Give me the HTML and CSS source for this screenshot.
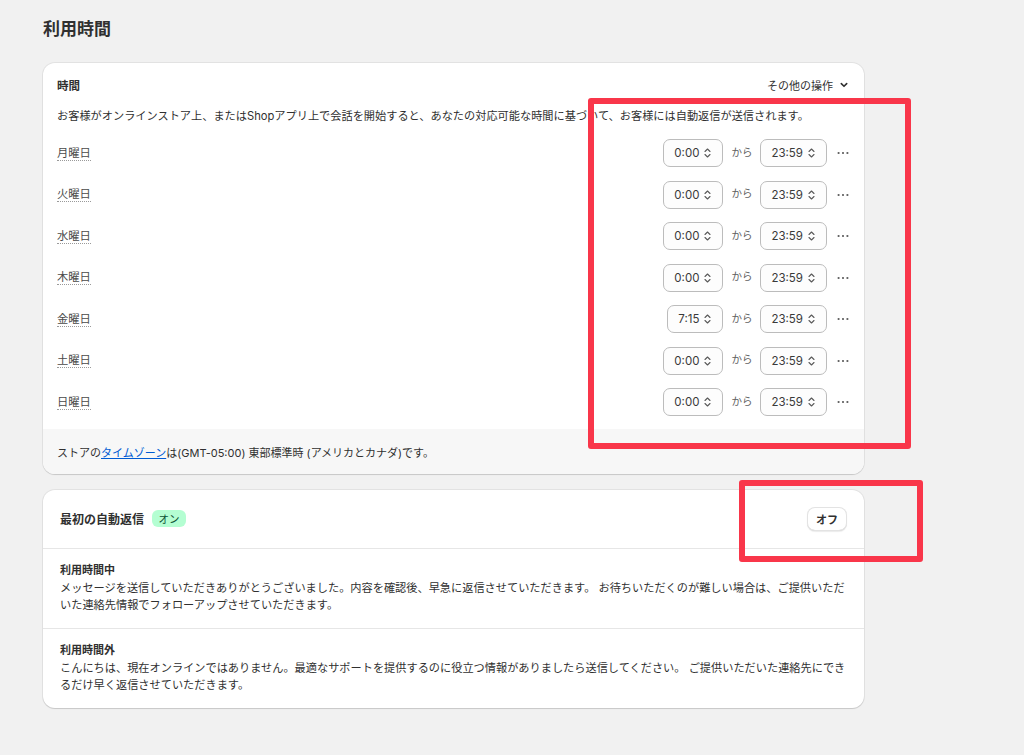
FILE: index.html
```html
<!DOCTYPE html>
<html lang="ja">
<head>
<meta charset="utf-8">
<title>利用時間</title>
<link rel="stylesheet" href="styles.css">
</head>
<body>
<div class="page">
  <h1 class="page-title">利用時間</h1>

  <section class="card">
    <div class="card-head">
      <h2>時間</h2>
      <div class="more">その他の操作
        <svg width="10" height="10" viewBox="0 0 10 10"><path d="M2.3 3.6 L5 6.3 L7.7 3.6" fill="none" stroke="#303030" stroke-width="1.6" stroke-linecap="round" stroke-linejoin="round"/></svg>
      </div>
    </div>
    <p class="desc">お客様がオンラインストア上、またはShopアプリ上で会話を開始すると、あなたの対応可能な時間に基づいて、お客様には自動返信が送信されます。</p>

    <div class="days">
      <div class="day"><span class="day-label">月曜日</span>
        <div class="controls">
          <div class="time">0:00<svg class="updown" width="7" height="12" viewBox="0 0 7 12"><path d="M1 4.5 L3.5 2 L6 4.5 M1 7.5 L3.5 10 L6 7.5" fill="none" stroke="#5a5a5a" stroke-width="1.1" stroke-linecap="round" stroke-linejoin="round"/></svg></div>
          <span class="from">から</span>
          <div class="time">23:59<svg class="updown" width="7" height="12" viewBox="0 0 7 12"><path d="M1 4.5 L3.5 2 L6 4.5 M1 7.5 L3.5 10 L6 7.5" fill="none" stroke="#5a5a5a" stroke-width="1.1" stroke-linecap="round" stroke-linejoin="round"/></svg></div>
          <svg class="dots" width="12" height="4" viewBox="0 0 12 4"><circle cx="1.6" cy="2" r="1.1" fill="#5a5a5a"/><circle cx="6" cy="2" r="1.1" fill="#5a5a5a"/><circle cx="10.4" cy="2" r="1.1" fill="#5a5a5a"/></svg>
        </div>
      </div>
      <div class="day"><span class="day-label">火曜日</span>
        <div class="controls">
          <div class="time">0:00<svg class="updown" width="7" height="12" viewBox="0 0 7 12"><path d="M1 4.5 L3.5 2 L6 4.5 M1 7.5 L3.5 10 L6 7.5" fill="none" stroke="#5a5a5a" stroke-width="1.1" stroke-linecap="round" stroke-linejoin="round"/></svg></div>
          <span class="from">から</span>
          <div class="time">23:59<svg class="updown" width="7" height="12" viewBox="0 0 7 12"><path d="M1 4.5 L3.5 2 L6 4.5 M1 7.5 L3.5 10 L6 7.5" fill="none" stroke="#5a5a5a" stroke-width="1.1" stroke-linecap="round" stroke-linejoin="round"/></svg></div>
          <svg class="dots" width="12" height="4" viewBox="0 0 12 4"><circle cx="1.6" cy="2" r="1.1" fill="#5a5a5a"/><circle cx="6" cy="2" r="1.1" fill="#5a5a5a"/><circle cx="10.4" cy="2" r="1.1" fill="#5a5a5a"/></svg>
        </div>
      </div>
      <div class="day"><span class="day-label">水曜日</span>
        <div class="controls">
          <div class="time">0:00<svg class="updown" width="7" height="12" viewBox="0 0 7 12"><path d="M1 4.5 L3.5 2 L6 4.5 M1 7.5 L3.5 10 L6 7.5" fill="none" stroke="#5a5a5a" stroke-width="1.1" stroke-linecap="round" stroke-linejoin="round"/></svg></div>
          <span class="from">から</span>
          <div class="time">23:59<svg class="updown" width="7" height="12" viewBox="0 0 7 12"><path d="M1 4.5 L3.5 2 L6 4.5 M1 7.5 L3.5 10 L6 7.5" fill="none" stroke="#5a5a5a" stroke-width="1.1" stroke-linecap="round" stroke-linejoin="round"/></svg></div>
          <svg class="dots" width="12" height="4" viewBox="0 0 12 4"><circle cx="1.6" cy="2" r="1.1" fill="#5a5a5a"/><circle cx="6" cy="2" r="1.1" fill="#5a5a5a"/><circle cx="10.4" cy="2" r="1.1" fill="#5a5a5a"/></svg>
        </div>
      </div>
      <div class="day"><span class="day-label">木曜日</span>
        <div class="controls">
          <div class="time">0:00<svg class="updown" width="7" height="12" viewBox="0 0 7 12"><path d="M1 4.5 L3.5 2 L6 4.5 M1 7.5 L3.5 10 L6 7.5" fill="none" stroke="#5a5a5a" stroke-width="1.1" stroke-linecap="round" stroke-linejoin="round"/></svg></div>
          <span class="from">から</span>
          <div class="time">23:59<svg class="updown" width="7" height="12" viewBox="0 0 7 12"><path d="M1 4.5 L3.5 2 L6 4.5 M1 7.5 L3.5 10 L6 7.5" fill="none" stroke="#5a5a5a" stroke-width="1.1" stroke-linecap="round" stroke-linejoin="round"/></svg></div>
          <svg class="dots" width="12" height="4" viewBox="0 0 12 4"><circle cx="1.6" cy="2" r="1.1" fill="#5a5a5a"/><circle cx="6" cy="2" r="1.1" fill="#5a5a5a"/><circle cx="10.4" cy="2" r="1.1" fill="#5a5a5a"/></svg>
        </div>
      </div>
      <div class="day"><span class="day-label">金曜日</span>
        <div class="controls">
          <div class="time">7:15<svg class="updown" width="7" height="12" viewBox="0 0 7 12"><path d="M1 4.5 L3.5 2 L6 4.5 M1 7.5 L3.5 10 L6 7.5" fill="none" stroke="#5a5a5a" stroke-width="1.1" stroke-linecap="round" stroke-linejoin="round"/></svg></div>
          <span class="from">から</span>
          <div class="time">23:59<svg class="updown" width="7" height="12" viewBox="0 0 7 12"><path d="M1 4.5 L3.5 2 L6 4.5 M1 7.5 L3.5 10 L6 7.5" fill="none" stroke="#5a5a5a" stroke-width="1.1" stroke-linecap="round" stroke-linejoin="round"/></svg></div>
          <svg class="dots" width="12" height="4" viewBox="0 0 12 4"><circle cx="1.6" cy="2" r="1.1" fill="#5a5a5a"/><circle cx="6" cy="2" r="1.1" fill="#5a5a5a"/><circle cx="10.4" cy="2" r="1.1" fill="#5a5a5a"/></svg>
        </div>
      </div>
      <div class="day"><span class="day-label">土曜日</span>
        <div class="controls">
          <div class="time">0:00<svg class="updown" width="7" height="12" viewBox="0 0 7 12"><path d="M1 4.5 L3.5 2 L6 4.5 M1 7.5 L3.5 10 L6 7.5" fill="none" stroke="#5a5a5a" stroke-width="1.1" stroke-linecap="round" stroke-linejoin="round"/></svg></div>
          <span class="from">から</span>
          <div class="time">23:59<svg class="updown" width="7" height="12" viewBox="0 0 7 12"><path d="M1 4.5 L3.5 2 L6 4.5 M1 7.5 L3.5 10 L6 7.5" fill="none" stroke="#5a5a5a" stroke-width="1.1" stroke-linecap="round" stroke-linejoin="round"/></svg></div>
          <svg class="dots" width="12" height="4" viewBox="0 0 12 4"><circle cx="1.6" cy="2" r="1.1" fill="#5a5a5a"/><circle cx="6" cy="2" r="1.1" fill="#5a5a5a"/><circle cx="10.4" cy="2" r="1.1" fill="#5a5a5a"/></svg>
        </div>
      </div>
      <div class="day"><span class="day-label">日曜日</span>
        <div class="controls">
          <div class="time">0:00<svg class="updown" width="7" height="12" viewBox="0 0 7 12"><path d="M1 4.5 L3.5 2 L6 4.5 M1 7.5 L3.5 10 L6 7.5" fill="none" stroke="#5a5a5a" stroke-width="1.1" stroke-linecap="round" stroke-linejoin="round"/></svg></div>
          <span class="from">から</span>
          <div class="time">23:59<svg class="updown" width="7" height="12" viewBox="0 0 7 12"><path d="M1 4.5 L3.5 2 L6 4.5 M1 7.5 L3.5 10 L6 7.5" fill="none" stroke="#5a5a5a" stroke-width="1.1" stroke-linecap="round" stroke-linejoin="round"/></svg></div>
          <svg class="dots" width="12" height="4" viewBox="0 0 12 4"><circle cx="1.6" cy="2" r="1.1" fill="#5a5a5a"/><circle cx="6" cy="2" r="1.1" fill="#5a5a5a"/><circle cx="10.4" cy="2" r="1.1" fill="#5a5a5a"/></svg>
        </div>
      </div>
    </div>

    <div class="card-foot">ストアの<a href="#" class="link">タイムゾーン</a>は(GMT-05:00) 東部標準時 (アメリカとカナダ)です。</div>
  </section>

  <section class="card card-reply">
    <div class="reply-head">
      <h2>最初の自動返信</h2>
      <span class="badge">オン</span>
      <button class="btn">オフ</button>
    </div>
    <div class="sec">
      <h3>利用時間中</h3>
      <p>メッセージを送信していただきありがとうございました。内容を確認後、早急に返信させていただきます。 お待ちいただくのが難しい場合は、ご提供いただ<br>いた連絡先情報でフォローアップさせていただきます。</p>
    </div>
    <div class="sec">
      <h3>利用時間外</h3>
      <p>こんにちは、現在オンラインではありません。最適なサポートを提供するのに役立つ情報がありましたら送信してください。 ご提供いただいた連絡先にでき<br>るだけ早く返信させていただきます。</p>
    </div>
  </section>

  <div class="mark mark-a"></div>
  <div class="mark mark-b"></div>
</div>
</body>
</html>
```

FILE: styles.css
```css
body {
  margin: 0;
  background: #f1f1f1;
  font-family: Inter, "Noto Sans CJK JP", sans-serif;
  color: #303030;
}

.page {
  position: relative;
  width: 821px;
  padding: 17px 0 40px 43px;
}

.page-title {
  margin: 0 0 22px;
  font-size: 17px;
  line-height: 24px;
  font-weight: 700;
}

.card {
  background: #fff;
  border-radius: 12px;
  overflow: hidden;
  box-shadow: 0 0 0 1px rgba(0, 0, 0, 0.06), 0 1px 1px rgba(0, 0, 0, 0.12);
}

.card + .card {
  margin-top: 16px;
}

.card-head {
  display: flex;
  align-items: center;
  justify-content: space-between;
  height: 20px;
  padding: 12px 15px 0 14px;
}

.card-head h2 {
  margin: 0;
  font-size: 11.5px;
  font-weight: 700;
}

.more {
  display: flex;
  align-items: center;
  gap: 6px;
  font-size: 11px;
}

.desc {
  margin: 12px 14px 0;
  font-size: 11.2px;
  line-height: 18px;
}

.days {
  display: flex;
  flex-direction: column;
  gap: 13.5px;
  padding: 14px 15px 12.5px 14px;
}

.day {
  display: flex;
  align-items: center;
  height: 28px;
}

.day-label {
  display: inline-block;
  font-size: 11.3px;
  line-height: 14px;
  color: #4a4a4a;
  border-bottom: 1px dotted #9a9a9a;
}

.controls {
  display: flex;
  align-items: center;
  margin-left: auto;
}

.time {
  display: flex;
  align-items: center;
  gap: 5px;
  height: 28px;
  box-sizing: border-box;
  padding: 0 11px 0 10px;
  border: 1px solid #bcbcbc;
  border-radius: 7px;
  background: #fdfdfd;
  font-size: 11.5px;
  color: #3a3a3a;
}

.updown {
  display: block;
}

.from {
  margin: 0 8px;
  font-size: 10.5px;
  line-height: 1;
  color: #616161;
}

.dots {
  display: block;
  margin-left: 10px;
}

.card-foot {
  padding: 15.5px 14px 11.5px;
  background: #f7f7f7;
  font-size: 11px;
  line-height: 18px;
}

.link {
  color: #005bd3;
  text-decoration: underline;
}

.reply-head {
  display: flex;
  align-items: center;
  gap: 8px;
  height: 24px;
  padding: 17px 17px;
}

.reply-head h2 {
  margin: 0;
  font-size: 12px;
  font-weight: 700;
}

.badge {
  display: inline-flex;
  align-items: center;
  height: 17px;
  padding: 0 6.5px;
  border-radius: 6px;
  background: #b4fed2;
  color: #0c5132;
  font-size: 10.5px;
}

.btn {
  margin-left: auto;
  width: 40px;
  height: 24px;
  padding: 0;
  border: none;
  border-radius: 8px;
  background: #fff;
  box-shadow: inset 0 0 0 1px #e3e3e3, inset 0 -1px 0 #cfcfcf, 0 1px 1px rgba(0, 0, 0, 0.08);
  font-family: inherit;
  font-size: 11px;
  font-weight: 700;
  color: #303030;
}

.sec {
  padding: 12px 17px 14px;
  border-top: 1px solid #e6e6e6;
}

.sec h3 {
  margin: 0;
  font-size: 11px;
  line-height: 19px;
  font-weight: 700;
}

.sec p {
  margin: 0;
  font-size: 11.2px;
  line-height: 17px;
}

.mark {
  position: absolute;
  box-sizing: border-box;
  border: 6px solid #f9364a;
  border-radius: 3px;
}

.mark-a {
  left: 588px;
  top: 98px;
  width: 323px;
  height: 351px;
}

.mark-b {
  left: 739px;
  top: 480px;
  width: 184px;
  height: 82px;
}
```
